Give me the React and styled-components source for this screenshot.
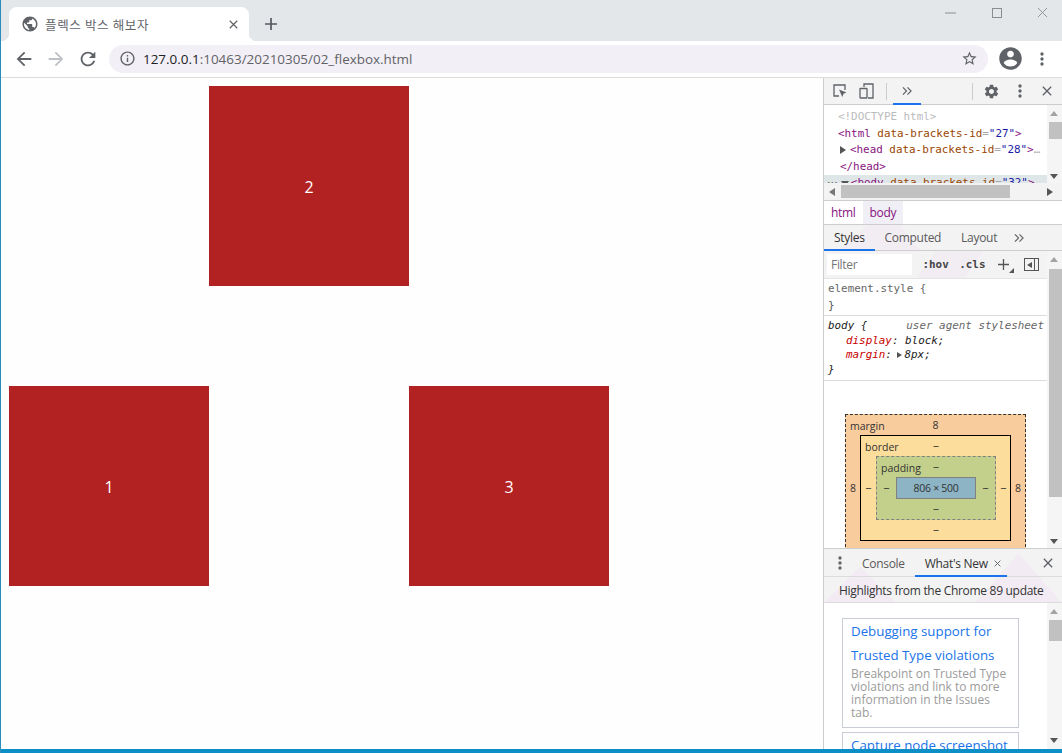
import React from 'react';
import styled, {createGlobalStyle} from 'styled-components';

const UI_FONT = '"Open Sans", "Noto Sans", "Liberation Sans", sans-serif';
const MONO_FONT = '"DejaVu Sans Mono", "Liberation Mono", monospace';
const MONO_SIZE = '10.9px';

const GlobalStyle = createGlobalStyle`
    html, body {
        margin: 0;
        padding: 0;
        background: #fefefe;
    }
    * {
        box-sizing: border-box;
    }
`;

const Window = styled.div`
    width: 1062px;
    height: 753px;
    display: flex;
    flex-direction: column;
    overflow: hidden;
    border-left: 1px solid #2a8cba;
    font-family: ${UI_FONT};
    background: #fefefe;
`;

const TitleBar = styled.div`
    height: 41px;
    flex: none;
    display: flex;
    align-items: flex-end;
    padding-left: 8px;
    background: #e3e7ea;
`;

const Tab = styled.div`
    position: relative;
    width: 240px;
    height: 34px;
    display: flex;
    align-items: center;
    padding: 0 11px 0 12px;
    background: #fff;
    border-radius: 8px 8px 0 0;

    &::before, &::after {
        content: '';
        position: absolute;
        bottom: 0;
        width: 8px;
        height: 8px;
    }

    &::before {
        left: -8px;
        background: radial-gradient(circle at 0 0, transparent 8px, #fff 8.5px);
    }

    &::after {
        right: -8px;
        background: radial-gradient(circle at 100% 0, transparent 8px, #fff 8.5px);
    }
`;

const TabTitle = styled.span`
    flex: 1;
    margin-left: 6px;
    font: 12.5px "Noto Sans CJK KR", sans-serif;
    letter-spacing: 0.65px;
    color: #5f6368;
`;

const NewTab = styled.div`
    display: flex;
    margin: 0 0 11px 16px;
    color: #55595e;
`;

const WindowControls = styled.div`
    margin-left: auto;
    align-self: flex-start;
    display: flex;
    align-items: center;
    gap: 35.5px;
    padding: 7px 14px 0 0;
    color: #8a8d90;
`;

const Toolbar = styled.div`
    height: 37px;
    flex: none;
    display: flex;
    align-items: center;
    padding: 0 0 1px 12px;
    background: #fff;
    border-bottom: 1px solid #dcdcdc;
`;

const NavButtons = styled.div`
    display: flex;
    gap: 10px;
    margin-right: 10px;
`;

const NavIcon = styled.svg`
    width: 22px;
    height: 22px;
    fill: ${props => (props.$muted ? '#bdc1c6' : '#5f6368')};
    transform: ${props => (props.$flip ? 'scaleX(-1)' : 'none')};
`;

const AddressPill = styled.div`
    width: 879px;
    height: 28px;
    display: flex;
    align-items: center;
    padding: 0 10px 0 10px;
    background: #f3eff6;
    border-radius: 14px;
`;

const AddressText = styled.span`
    flex: 1;
    margin-left: 7px;
    font-size: 13.45px;
    color: #5f6368;
    white-space: nowrap;

    b {
        font-weight: 400;
        color: #202124;
    }
`;

const ToolbarEnd = styled.div`
    display: flex;
    align-items: center;
    margin-left: 8.5px;
    gap: 8.5px;
`;

const Body = styled.div`
    flex: 1;
    min-height: 0;
    display: flex;
`;

const Page = styled.div`
    width: 822px;
    flex: none;
    padding: 8px;
    background: #fefefe;
`;

const FlexStage = styled.div`
    display: flex;
    height: 500px;
`;

const FlexItem = styled.div`
    width: 200px;
    height: 200px;
    display: flex;
    align-items: center;
    justify-content: center;
    align-self: ${props => props.$align};
    padding-top: 2px;
    background: #b22222;
    color: #fff;
    font-size: 16px;
`;

const TaskbarEdge = styled.div`
    height: 4px;
    flex: none;
    background: #0b8fc6;
`;

const DevTools = styled.div`
    flex: 1;
    min-width: 0;
    display: flex;
    flex-direction: column;
    border-left: 1px solid #cdcdcd;
    font-size: 12px;
    letter-spacing: -0.3px;
    color: #333;
`;

const DevToolbar = styled.div`
    height: 27px;
    flex: none;
    display: flex;
    align-items: center;
    padding-left: 8px;
    background: #f3f3f3;
    border-bottom: 1px solid #cdcdcd;
`;

const Spacer = styled.span`
    width: ${props => props.$width}px;
    flex: none;
`;

const Grow = styled.span`
    flex: 1;
`;

const ToolSeparator = styled.span`
    width: 1px;
    height: 17px;
    margin: ${props => props.$margin};
    background: #ccc;
`;

const ActiveTool = styled.div`
    position: relative;
    display: flex;
    align-items: center;
    justify-content: center;
    width: 28px;
    height: 26px;

    &::after {
        content: '';
        position: absolute;
        left: 0;
        right: 0;
        bottom: -1px;
        height: 2px;
        background: #1a73e8;
    }
`;

const ElementsPanel = styled.div`
    height: 95px;
    flex: none;
    display: grid;
    grid-template-columns: 1fr 15px;
    grid-template-rows: 78px 17px;
    background: #fff;
`;

const DomTree = styled.div`
    overflow: hidden;
    padding-top: 4px;
    font: ${MONO_SIZE}/16.6px ${MONO_FONT};
    letter-spacing: 0;
`;

const DomLine = styled.div`
    display: flex;
    align-items: center;
    height: 16.6px;
    padding-left: ${props => props.$indent}px;
    white-space: nowrap;
    overflow: hidden;
    color: #a8a8a8;
    background: ${props => (props.$selected ? '#dfe6e8' : 'transparent')};
`;

const Ellipsis = styled.span`
    font-size: 9px;
    letter-spacing: -1.8px;
    color: #555;
`;

const Tag = styled.span`
    color: ${props => (props.$faint ? '#bbb' : '#881280')};
`;

const Attr = styled.span`
    color: #994500;
`;

const Val = styled.span`
    color: #1a1aa6;
`;

const CARET_WIDTHS = {
    right: '4px 0 4px 6px',
    left: '4px 6px 4px 0',
    down: '6px 4px 0 4px',
    small: '3.5px 0 3.5px 5px',
};

const CARET_COLORS = {
    right: 'transparent transparent transparent #555',
    left: 'transparent #777 transparent transparent',
    down: '#555 transparent transparent transparent',
    small: 'transparent transparent transparent #555',
};

const Caret = styled.span`
    width: 0;
    height: 0;
    margin: ${props => props.$margin || '0 4px 0 0'};
    flex: none;
    border-style: solid;
    border-width: ${props => CARET_WIDTHS[props.$dir || 'right']};
    border-color: ${props => CARET_COLORS[props.$dir || 'right']};
`;

const VScroll = styled.div`
    position: relative;
    width: 15px;
    flex: none;
    background: #f5f5f5;
    overflow: hidden;
`;

const VThumb = styled.div`
    margin: ${props => props.$top}px 0 0 2px;
    height: ${props => props.$height}px;
    background: #c1c1c1;
`;

const ScrollArrow = styled.span`
    position: absolute;
    left: 3px;
    ${props => (props.$down ? `bottom: ${props.$offset}px;` : `top: ${props.$offset}px;`)}
    width: 0;
    height: 0;
    border-style: solid;
    border-width: ${props => (props.$down ? '5px 4px 0 4px' : '0 4px 5px 4px')};
    border-color: ${props => (props.$down
        ? '#555 transparent transparent transparent'
        : 'transparent transparent #a3a3a3 transparent')};
`;

const HScroll = styled.div`
    grid-column: 1 / 3;
    display: flex;
    align-items: center;
    padding: 0 5px;
    background: #f3f3f3;
`;

const HThumb = styled.div`
    width: 169px;
    height: 13px;
    margin: 0 auto 0 2px;
    background: #c1c1c1;
`;

const Crumbs = styled.div`
    height: 25px;
    flex: none;
    display: flex;
    background: #fff;
    border-top: 1px solid #cdcdcd;
    border-bottom: 1px solid #cdcdcd;
`;

const Crumb = styled.span`
    display: flex;
    align-items: center;
    padding: 0 7px;
    color: #881280;
    background: ${props => (props.$active ? '#f0eff5' : 'transparent')};
`;

const SubTabs = styled.div`
    position: relative;
    height: 26px;
    flex: none;
    display: flex;
    align-items: center;
    background: #f3f3f3;
    border-bottom: 1px solid #cdcdcd;

    &::before {
        content: '';
        position: absolute;
        left: 16px;
        top: 0;
        width: 80px;
        height: 25px;
        background: #f2ecf3;
        clip-path: polygon(35% 0, 75% 0, 100% 100%, 0 100%);
    }

    > * {
        z-index: 1;
    }
`;

const SubTab = styled.span`
    position: relative;
    display: flex;
    align-items: center;
    height: 25px;
    padding: 0 ${props => props.$pad || 10}px;
    color: ${props => (props.$active ? '#333' : '#5a5a5a')};

    ${props => props.$active && `
        &::after {
            content: '';
            position: absolute;
            left: 0;
            right: 0;
            bottom: -1px;
            height: 2px;
            background: #1a73e8;
        }
    `}
`;

const StylesArea = styled.div`
    flex: none;
    height: 297px;
    display: flex;
    overflow: hidden;
    background: #fff;
`;

const StylesColumn = styled.div`
    flex: 1;
    min-width: 0;
`;

const FilterRow = styled.div`
    height: 28px;
    display: flex;
    align-items: center;
    padding-left: 3px;
    background: linear-gradient(125deg, #f3f3f3 0 46%, #f2ecf3 46% 66%, #f3f3f3 66%);
    border-bottom: 1px solid #e4e4e4;
`;

const FilterBox = styled.div`
    width: 85px;
    height: 21px;
    display: flex;
    align-items: center;
    padding-left: 4px;
    background: #fff;
    font-size: 12px;
    color: #777;
`;

const FilterToggle = styled.span`
    margin-left: 10.5px;
    font: bold ${MONO_SIZE} ${MONO_FONT};
    letter-spacing: 0;
    color: #444;
`;

const AddButton = styled.span`
    position: relative;
    display: flex;
    margin-left: 13px;
    color: #555;

    &::after {
        content: '';
        position: absolute;
        right: -5px;
        bottom: -3px;
        border-style: solid;
        border-width: 0 0 5px 5px;
        border-color: transparent transparent #555 transparent;
    }
`;

const SidebarToggle = styled.span`
    width: 15px;
    height: 13px;
    display: flex;
    align-items: center;
    justify-content: space-between;
    margin-left: 15px;
    border: 1px solid #555;
    padding: 0 3px 0 2px;

    &::before {
        content: '';
        border-style: solid;
        border-width: 3px 5px 3px 0;
        border-color: transparent #555 transparent transparent;
    }

    &::after {
        content: '';
        width: 1px;
        height: 11px;
        background: #555;
    }
`;

const Rule = styled.div`
    height: ${props => props.$height}px;
    padding: ${props => props.$pad};
    border-bottom: 1px solid #dcdcdc;
    font: ${MONO_SIZE}/${props => props.$line}px ${MONO_FONT};
    letter-spacing: 0;
    color: #555;
`;

const RuleHead = styled.div`
    display: flex;
    justify-content: space-between;
    white-space: nowrap;
    font-style: ${props => (props.$italic ? 'italic' : 'normal')};
    color: ${props => (props.$italic ? '#222' : '#666')};
`;

const Origin = styled.span`
    color: #666;
    padding-right: 3px;
`;

const Decl = styled.div`
    display: flex;
    align-items: center;
    padding-left: 18px;
    font-style: italic;
    color: #222;

    em {
        color: #c80000;
    }
`;

const BoxModelWrap = styled.div`
    padding: 33px 0 0 21px;
`;

const BoxLayer = styled.div`
    position: relative;
    width: ${props => props.$width}px;
    display: grid;
    grid-template-columns: ${props => props.$side}px 1fr ${props => props.$side}px;
    grid-template-rows: ${props => props.$rows}px auto ${props => props.$rows}px;
    align-items: center;
    justify-items: center;
    background: ${props => props.$bg};
    border: 1px ${props => props.$line} ${props => props.$lineColor};
    font-size: 10.5px;
    letter-spacing: 0;
    color: #333;
`;

const BoxName = styled.span`
    position: absolute;
    left: 4px;
    top: 4px;
    color: #333;
`;

const BoxContent = styled.div`
    width: 80px;
    height: 22px;
    display: flex;
    align-items: center;
    justify-content: center;
    grid-column: 2;
    background: #8cb4c4;
    border: 1px solid #808080;
    letter-spacing: -0.3px;
`;

const DrawerTop = styled.div`
    position: relative;
    flex: none;
    background: #f3f3f3;
    overflow: hidden;

    &::before, &::after {
        content: '';
        position: absolute;
        bottom: 0;
        background: #f2ebf3;
        clip-path: polygon(50% 0, 100% 100%, 0 100%);
    }

    &::before {
        left: 0;
        width: 72px;
        height: 36px;
    }

    &::after {
        right: 0;
        width: 87px;
        height: 50px;
    }

    > * {
        position: relative;
        z-index: 1;
    }
`;

const DrawerHead = styled.div`
    height: 29px;
    display: flex;
    align-items: center;
    padding: 1px 0 0 6px;
    border-top: 1px solid #cdcdcd;
    border-bottom: 1px solid #dcdcdc;
    color: #5a5a5a;
`;

const DrawerTab = styled.div`
    position: relative;
    display: flex;
    align-items: center;
    gap: 6px;
    height: 27px;
    padding: 0 ${props => (props.$active ? 6 : 10)}px 0 10px;
    margin-left: ${props => props.$left || 0}px;
    color: ${props => (props.$active ? '#333' : '#5a5a5a')};

    ${props => props.$active && `
        &::after {
            content: '';
            position: absolute;
            left: 0;
            right: 0;
            bottom: 0;
            height: 2px;
            background: #1a73e8;
        }
    `}
`;

const HighlightBar = styled.div`
    height: 26px;
    display: flex;
    align-items: center;
    padding: 1px 0 0 15px;
    border-bottom: 1px solid #dcdcdc;
    color: #333;
`;

const NewsArea = styled.div`
    flex: 1;
    min-height: 0;
    display: flex;
    overflow: hidden;
    background: #fff;
`;

const NewsList = styled.div`
    flex: 1;
    min-width: 0;
    padding: 15px 0 0 18px;
    display: flex;
    flex-direction: column;
    gap: 4px;
    letter-spacing: 0;
`;

const NewsCard = styled.div`
    width: 177px;
    flex: none;
    padding: 0 8px 8px 8px;
    border: 1px solid #c7ccd6;
`;

const NewsTitle = styled.div`
    font-size: 13.3px;
    line-height: 24px;
    color: #1a73e8;
    white-space: nowrap;
`;

const NewsText = styled.div`
    font-size: 12px;
    line-height: 13px;
    color: #9b9b9b;
`;

const Glyph = styled.svg`
    width: ${props => props.$size || 16}px;
    height: ${props => props.$size || 16}px;
    flex: none;
    fill: ${props => props.$color || '#5f6368'};
`;

const Stroke = styled.svg`
    width: ${props => props.$size || 12}px;
    height: ${props => props.$size || 12}px;
    flex: none;
    fill: none;
    stroke: ${props => props.$color || 'currentColor'};
    stroke-width: ${props => props.$weight || 1.5};
`;

const ICONS = {
    globe: 'M12 2C6.48 2 2 6.48 2 12s4.48 10 10 10 10-4.48 10-10S17.52 2 12 2zm-1 17.93c-3.95-.49-7-3.85-7-7.93 0-.62.08-1.21.21-1.79L9 15v1c0 1.1.9 2 2 2v1.93zm6.9-2.54c-.26-.81-1-1.39-1.9-1.39h-1v-3c0-.55-.45-1-1-1H8v-2h2c.55 0 1-.45 1-1V7h2c1.1 0 2-.9 2-2v-.41c2.93 1.19 5 4.06 5 7.41 0 2.08-.8 3.97-2.1 5.39z',
    arrow: 'M20 11H7.83l5.59-5.59L12 4l-8 8 8 8 1.41-1.41L7.83 13H20v-2z',
    reload: 'M17.65 6.35C16.2 4.9 14.21 4 12 4c-4.42 0-7.99 3.58-7.99 8s3.57 8 7.99 8c3.73 0 6.84-2.55 7.73-6h-2.08c-.82 2.33-3.04 4-5.65 4-3.31 0-6-2.69-6-6s2.69-6 6-6c1.66 0 3.14.69 4.22 1.78L13 11h7V4l-2.35 2.35z',
    info: 'M11 7h2v2h-2zm0 4h2v6h-2zm1-9C6.48 2 2 6.48 2 12s4.48 10 10 10 10-4.48 10-10S17.52 2 12 2zm0 18c-4.41 0-8-3.59-8-8s3.59-8 8-8 8 3.59 8 8-3.59 8-8 8z',
    star: 'M22 9.24l-7.19-.62L12 2 9.19 8.63 2 9.24l5.46 4.73L5.82 21 12 17.27 18.18 21l-1.63-7.03L22 9.24zM12 15.4l-3.76 2.27 1-4.28-3.32-2.88 4.38-.38L12 6.1l1.71 4.04 4.38.38-3.32 2.88 1 4.28L12 15.4z',
    account: 'M12 2C6.48 2 2 6.48 2 12s4.48 10 10 10 10-4.48 10-10S17.52 2 12 2zm0 3c1.66 0 3 1.34 3 3s-1.34 3-3 3-3-1.34-3-3 1.34-3 3-3zm0 14.2c-2.5 0-4.71-1.28-6-3.22.03-1.99 4-3.08 6-3.08 1.99 0 5.97 1.09 6 3.08-1.29 1.94-3.5 3.22-6 3.22z',
    dots: 'M12 8a2 2 0 1 0 0-4 2 2 0 0 0 0 4zm0 6a2 2 0 1 0 0-4 2 2 0 0 0 0 4zm0 6a2 2 0 1 0 0-4 2 2 0 0 0 0 4z',
    gear: 'M19.14 12.94c.04-.3.06-.61.06-.94 0-.32-.02-.64-.07-.94l2.03-1.58c.18-.14.23-.41.12-.61l-1.92-3.32c-.12-.22-.37-.29-.59-.22l-2.39.96c-.5-.38-1.03-.7-1.62-.94l-.36-2.54c-.04-.24-.24-.41-.48-.41h-3.84c-.24 0-.43.17-.47.41l-.36 2.54c-.59.24-1.13.57-1.62.94l-2.39-.96c-.22-.08-.47 0-.59.22L2.74 8.87c-.12.21-.08.47.12.61l2.03 1.58c-.05.3-.09.63-.09.94s.02.64.07.94l-2.03 1.58c-.18.14-.23.41-.12.61l1.92 3.32c.12.22.37.29.59.22l2.39-.96c.5.38 1.03.7 1.62.94l.36 2.54c.05.24.24.41.48.41h3.84c.24 0 .44-.17.47-.41l.36-2.54c.59-.24 1.13-.56 1.62-.94l2.39.96c.22.08.47 0 .59-.22l1.92-3.32c.12-.22.07-.47-.12-.61l-2.01-1.58zM12 15.6c-1.98 0-3.6-1.62-3.6-3.6s1.62-3.6 3.6-3.6 3.6 1.62 3.6 3.6-1.62 3.6-3.6 3.6z',
};

const Icon = ({name, size, color}) => (
    <Glyph viewBox="0 0 24 24" $size={size} $color={color}><path d={ICONS[name]} /></Glyph>
);

const CloseIcon = ({size, color, weight}) => (
    <Stroke viewBox="0 0 12 12" $size={size} $color={color} $weight={weight}><path d="M1 1l10 10M11 1L1 11" /></Stroke>
);

const PlusIcon = ({size, weight}) => (
    <Stroke viewBox="0 0 12 12" $size={size} $weight={weight}><path d="M6 0v12M0 6h12" /></Stroke>
);

const Chevrons = ({color}) => (
    <Stroke viewBox="0 0 11 10" $size={10} $color={color} $weight={1.3}><path d="M1 1l4 4-4 4M6 1l4 4-4 4" /></Stroke>
);

const InspectIcon = () => (
    <Stroke viewBox="0 0 16 16" $size={16} $color="#5f6368" $weight={1.3}>
        <path d="M7 13H2V2h11v5" />
        <path d="M7 6.5l7.5 3-3 1.2-1.2 3.3z" fill="#5f6368" stroke="none" />
    </Stroke>
);

const DeviceIcon = () => (
    <Stroke viewBox="0 0 16 16" $size={16} $color="#5f6368" $weight={1.3}>
        <path d="M5 4V1h9v14H9" />
        <rect x="1" y="5.5" width="7" height="9.5" rx="0.5" />
    </Stroke>
);

const MaximizeIcon = () => (
    <Stroke viewBox="0 0 10 10" $size={10} $color="#8a8d90" $weight={1}><rect x="0.5" y="0.5" width="9" height="9" /></Stroke>
);

const MinimizeIcon = () => (
    <Stroke viewBox="0 0 11 10" $size={11} $color="#8a8d90" $weight={1}><path d="M0 5.5h11" /></Stroke>
);

const BoxModel = () => (
    <BoxModelWrap>
        <BoxLayer $width={181} $side={14} $rows={20} $bg="#f9cc9d" $line="dashed" $lineColor="#333">
            <BoxName>margin</BoxName>
            <span />
            <span>8</span>
            <span />
            <span>8</span>
            <BoxLayer $width={151} $side={15} $rows={20} $bg="#fddd9b" $line="solid" $lineColor="#000">
                <BoxName>border</BoxName>
                <span />
                <span>‒</span>
                <span />
                <span>‒</span>
                <BoxLayer $width={120} $side={19} $rows={20} $bg="#c3d08b" $line="dashed" $lineColor="#808080">
                    <BoxName>padding</BoxName>
                    <span />
                    <span>‒</span>
                    <span />
                    <span>‒</span>
                    <BoxContent>806 × 500</BoxContent>
                    <span>‒</span>
                    <span />
                    <span>‒</span>
                    <span />
                </BoxLayer>
                <span>‒</span>
                <span />
                <span>‒</span>
                <span />
            </BoxLayer>
            <span>8</span>
            <span />
            <span>‒</span>
            <span />
        </BoxLayer>
    </BoxModelWrap>
);

const App = () => (
    <Window>
        <GlobalStyle />
        <TitleBar>
            <Tab>
                <Icon name="globe" size={18} />
                <TabTitle>플렉스 박스 해보자</TabTitle>
                <CloseIcon size={9} color="#5f6368" weight={1.6} />
            </Tab>
            <NewTab><PlusIcon size={12} weight={1.7} /></NewTab>
            <WindowControls>
                <MinimizeIcon />
                <MaximizeIcon />
                <CloseIcon size={11} color="#8a8d90" weight={1} />
            </WindowControls>
        </TitleBar>
        <Toolbar>
            <NavButtons>
                <NavIcon viewBox="0 0 24 24"><path d={ICONS.arrow} /></NavIcon>
                <NavIcon viewBox="0 0 24 24" $muted $flip><path d={ICONS.arrow} /></NavIcon>
                <NavIcon viewBox="0 0 24 24"><path d={ICONS.reload} /></NavIcon>
            </NavButtons>
            <AddressPill>
                <Icon name="info" size={17} />
                <AddressText><b>127.0.0.1</b>:10463/20210305/02_flexbox.html</AddressText>
                <Icon name="star" size={17} />
            </AddressPill>
            <ToolbarEnd>
                <Icon name="account" size={27} />
                <Icon name="dots" size={20} />
            </ToolbarEnd>
        </Toolbar>
        <Body>
            <Page>
                <FlexStage>
                    <FlexItem $align="flex-end">1</FlexItem>
                    <FlexItem $align="flex-start">2</FlexItem>
                    <FlexItem $align="flex-end">3</FlexItem>
                </FlexStage>
            </Page>
            <DevTools>
                <DevToolbar>
                    <InspectIcon />
                    <Spacer $width={11} />
                    <DeviceIcon />
                    <ToolSeparator $margin="0 6px 0 11px" />
                    <ActiveTool><Chevrons color="#5f6368" /></ActiveTool>
                    <ToolSeparator $margin="0 9.5px 0 51px" />
                    <Icon name="gear" size={17} />
                    <Spacer $width={10.5} />
                    <Icon name="dots" size={20} />
                    <Spacer $width={12} />
                    <CloseIcon size={10} color="#5f6368" weight={1.6} />
                </DevToolbar>
                <ElementsPanel>
                    <DomTree>
                        <DomLine $indent={14}><Tag $faint>&lt;!DOCTYPE html&gt;</Tag></DomLine>
                        <DomLine $indent={14}><Tag>&lt;html</Tag>&nbsp;<Attr>data-brackets-id</Attr>=<Val>"27"</Val><Tag>&gt;</Tag></DomLine>
                        <DomLine $indent={16}><Caret /><Tag>&lt;head</Tag>&nbsp;<Attr>data-brackets-id</Attr>=<Val>"28"</Val><Tag>&gt;</Tag>…</DomLine>
                        <DomLine $indent={16}><Tag>&lt;/head&gt;</Tag></DomLine>
                        <DomLine $indent={2} $selected>
                            <Ellipsis>···</Ellipsis>
                            <Caret $dir="down" $margin="0 2px 0 4px" />
                            <Tag>&lt;body</Tag>&nbsp;<Attr>data-brackets-id</Attr>=<Val>"32"</Val><Tag>&gt;</Tag>
                        </DomLine>
                    </DomTree>
                    <VScroll>
                        <ScrollArrow $offset={6} />
                        <VThumb $top={17} $height={17} />
                        <ScrollArrow $down $offset={4} />
                    </VScroll>
                    <HScroll>
                        <Caret $dir="left" />
                        <HThumb />
                        <Caret />
                    </HScroll>
                </ElementsPanel>
                <Crumbs>
                    <Crumb>html</Crumb>
                    <Crumb $active>body</Crumb>
                </Crumbs>
                <SubTabs>
                    <SubTab $active>Styles</SubTab>
                    <SubTab>Computed</SubTab>
                    <SubTab>Layout</SubTab>
                    <SubTab $pad={7}><Chevrons color="#666" /></SubTab>
                </SubTabs>
                <StylesArea>
                    <StylesColumn>
                        <FilterRow>
                            <FilterBox>Filter</FilterBox>
                            <FilterToggle>:hov</FilterToggle>
                            <FilterToggle>.cls</FilterToggle>
                            <AddButton><PlusIcon size={11} weight={1.4} /></AddButton>
                            <SidebarToggle />
                        </FilterRow>
                        <Rule $height={37} $pad="1px 0 0 4px" $line={17}>
                            <RuleHead>element.style {'{'}</RuleHead>
                            <div>{'}'}</div>
                        </Rule>
                        <Rule $height={65} $pad="3px 0 0 4px" $line={14.6}>
                            <RuleHead $italic>
                                <span>body {'{'}</span>
                                <Origin>user agent stylesheet</Origin>
                            </RuleHead>
                            <Decl><em>display</em>:&nbsp;block;</Decl>
                            <Decl><em>margin</em>:&nbsp;<Caret $dir="small" $margin="0 2px 0 -1px" />8px;</Decl>
                            <RuleHead $italic>{'}'}</RuleHead>
                        </Rule>
                        <BoxModel />
                    </StylesColumn>
                    <VScroll>
                        <ScrollArrow $offset={6} />
                        <VThumb $top={18} $height={228} />
                        <ScrollArrow $down $offset={4} />
                    </VScroll>
                </StylesArea>
                <DrawerTop>
                    <DrawerHead>
                        <Icon name="dots" size={20} />
                        <DrawerTab $left={2}>Console</DrawerTab>
                        <DrawerTab $active>What's New <CloseIcon size={7} color="#5f6368" weight={1.6} /></DrawerTab>
                        <Grow />
                        <CloseIcon size={10} color="#5f6368" weight={1.6} />
                        <Spacer $width={9} />
                    </DrawerHead>
                    <HighlightBar>Highlights from the Chrome 89 update</HighlightBar>
                </DrawerTop>
                <NewsArea>
                    <NewsList>
                        <NewsCard>
                            <NewsTitle>Debugging support for</NewsTitle>
                            <NewsTitle>Trusted Type violations</NewsTitle>
                            <NewsText>Breakpoint on Trusted Type violations and link to more information in the Issues tab.</NewsText>
                        </NewsCard>
                        <NewsCard>
                            <NewsTitle>Capture node screenshot</NewsTitle>
                        </NewsCard>
                    </NewsList>
                    <VScroll>
                        <ScrollArrow $offset={6} />
                        <VThumb $top={17} $height={21} />
                        <ScrollArrow $down $offset={6} />
                    </VScroll>
                </NewsArea>
            </DevTools>
        </Body>
        <TaskbarEdge />
    </Window>
);

export default App;
